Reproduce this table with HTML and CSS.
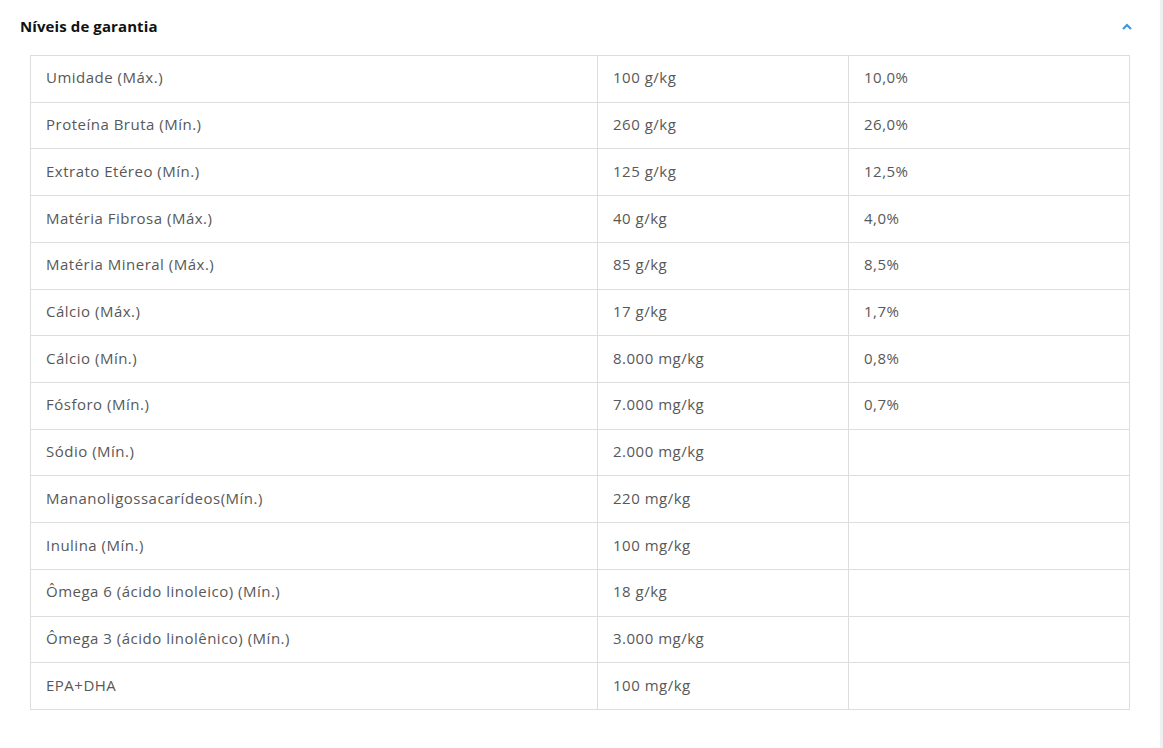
FILE: index.html
```html
<!DOCTYPE html>
<html lang="pt">
<head>
<meta charset="utf-8">
<link rel="stylesheet" href="styles.css">
</head>
<body>
<div class="page">
  <section class="acc">
    <header class="acc-head">
      <h2 class="acc-title">Níveis de garantia</h2>
      <svg class="chev" width="10" height="7" viewBox="0 0 10 7"><path d="M1 6 L5 2 L9 6" fill="none" stroke="#3b97e3" stroke-width="2.2"/></svg>
    </header>
    <table class="tbl">
      <tr><td>Umidade (Máx.)</td><td>100 g/kg</td><td>10,0%</td></tr>
      <tr><td>Proteína Bruta (Mín.)</td><td>260 g/kg</td><td>26,0%</td></tr>
      <tr><td>Extrato Etéreo (Mín.)</td><td>125 g/kg</td><td>12,5%</td></tr>
      <tr><td>Matéria Fibrosa (Máx.)</td><td>40 g/kg</td><td>4,0%</td></tr>
      <tr><td>Matéria Mineral (Máx.)</td><td>85 g/kg</td><td>8,5%</td></tr>
      <tr><td>Cálcio (Máx.)</td><td>17 g/kg</td><td>1,7%</td></tr>
      <tr><td>Cálcio (Mín.)</td><td>8.000 mg/kg</td><td>0,8%</td></tr>
      <tr><td>Fósforo (Mín.)</td><td>7.000 mg/kg</td><td>0,7%</td></tr>
      <tr><td>Sódio (Mín.)</td><td>2.000 mg/kg</td><td></td></tr>
      <tr><td>Mananoligossacarídeos(Mín.)</td><td>220 mg/kg</td><td></td></tr>
      <tr><td>Inulina (Mín.)</td><td>100 mg/kg</td><td></td></tr>
      <tr><td>Ômega 6 (ácido linoleico) (Mín.)</td><td>18 g/kg</td><td></td></tr>
      <tr><td>Ômega 3 (ácido linolênico) (Mín.)</td><td>3.000 mg/kg</td><td></td></tr>
      <tr><td>EPA+DHA</td><td>100 mg/kg</td><td></td></tr>
    </table>
  </section>
  <div class="scroll"></div>
</div>
</body>
</html>
```
FILE: styles.css
```css
html, body { margin: 0; padding: 0; background: #fdfcfd; }
body { font-family: "Open Sans", "Noto Sans", sans-serif; color: #585858; }
.page { display: flex; width: 1163px; height: 748px; overflow: hidden; }
.acc { flex: 1; background: #fff; }
.scroll { width: 3px; background: #f0eff1; }
.acc-head { display: flex; align-items: center; justify-content: space-between; height: 55px; padding: 0 28px 3px 20px; box-sizing: border-box; }
.acc-title { margin: 0; font-size: 15px; font-weight: 700; color: #111; letter-spacing: 0.1px; }
.chev { display: block; margin-top: 1px; }
.tbl { margin-left: 30px; width: 1100px; border-collapse: collapse; table-layout: fixed; font-size: 15px; letter-spacing: 0.5px; }
.tbl td { border: 1px solid #dedcde; height: 46.72px; padding: 0 15px 3px; box-sizing: border-box; vertical-align: middle; }
.tbl td:nth-child(1) { width: 567px; }
.tbl td:nth-child(2) { width: 251px; }
```
